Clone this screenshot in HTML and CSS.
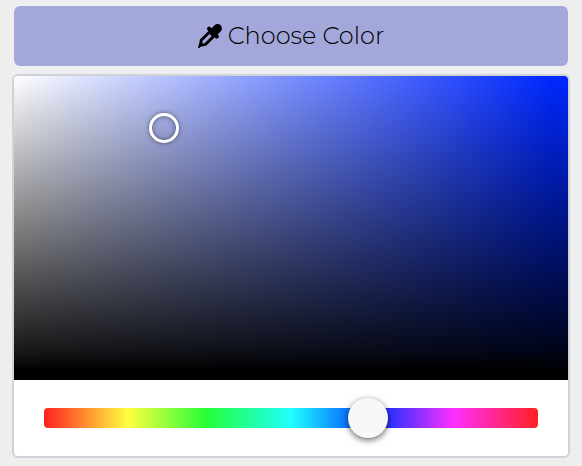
FILE: index.html
```html
<!DOCTYPE html>
<html lang="en">
<head>
  <meta charset="utf-8">
  <meta name="viewport" content="width=device-width, initial-scale=1">
  <title>Choose Color</title>
  <link rel="stylesheet" href="styles.css">
</head>
<body>
  <main class="picker">
    <button class="picker-button" type="button">
      <svg class="picker-icon" viewBox="0 0 24 24" aria-hidden="true">
        <path d="M11.3 8.2L3.2 16.3Q3 18.8 2.2 21.2Q4.8 20.9 7.6 20.3L15.8 12.1" stroke-width="2.9"/>
        <path d="M2.6 20.8L1 23" stroke-width="2"/>
        <path d="M11.1 4.7L18.8 12.4" stroke-width="4.2"/>
        <path d="M19.6 4.4L15.8 8.2" stroke-width="8.6"/>
      </svg>
      <span>Choose Color</span>
    </button>
    <section class="panel">
      <div class="shade">
        <span class="shade-handle"></span>
      </div>
      <div class="hue">
        <input class="hue-slider" type="range" min="0" max="360" value="241" aria-label="Hue">
      </div>
    </section>
  </main>
</body>
</html>
```
FILE: styles.css
```css
* {
  box-sizing: border-box;
}

body {
  margin: 0;
  background: #eeeeee;
  font-family: Montserrat, Lato, sans-serif;
}

.picker {
  display: flex;
  flex-direction: column;
  gap: 8px;
  padding: 6px 12px 8px;
}

.picker-button {
  display: flex;
  align-items: center;
  justify-content: center;
  gap: 6px;
  margin: 0 2px;
  padding: 14px;
  border: 0;
  border-radius: 6px;
  background: #a4a7da;
  color: #000;
  font-family: inherit;
  font-size: 24px;
  font-weight: 300;
  line-height: 32px;
}

.picker-icon {
  width: 24px;
  height: 24px;
  fill: none;
  stroke: currentColor;
  stroke-linecap: round;
  stroke-linejoin: round;
}

.panel {
  overflow: hidden;
  border: 2px solid #ced2d9;
  border-radius: 6px;
  background: #fff;
}

/* Saturation runs left to right, brightness top to bottom. */
.shade {
  position: relative;
  height: 304px;
  background:
    linear-gradient(to bottom, transparent, rgba(0, 0, 0, 0.9) 90%, #000 97%),
    linear-gradient(to right, #fff, #7a8fff 50%, #0028ff 97%);
}

.shade-handle {
  position: absolute;
  top: 17%;
  left: 27%;
  width: 30px;
  height: 30px;
  border: 3px solid #fff;
  border-radius: 50%;
  box-shadow: 0 0 4px rgba(0, 0, 0, 0.5), inset 0 0 5px rgba(0, 0, 0, 0.5);
  transform: translate(-50%, -50%);
}

.hue {
  display: flex;
  padding: 28px 30px;
}

.hue-slider {
  flex: 1;
  height: 20px;
  min-width: 0;
  margin: 0;
  border-radius: 4px;
  background: linear-gradient(to right, #ff2020, #ffff40 17%, #24ff38 33%, #20ffff 50%, #0030ff 67%, #ff30ff 83%, #ff2020);
  appearance: none;
}

.hue-slider::-webkit-slider-thumb {
  width: 40px;
  height: 40px;
  border: 0;
  border-radius: 50%;
  background: #f8f8f8;
  box-shadow: 0 2px 6px rgba(0, 0, 0, 0.6);
  appearance: none;
}
```
